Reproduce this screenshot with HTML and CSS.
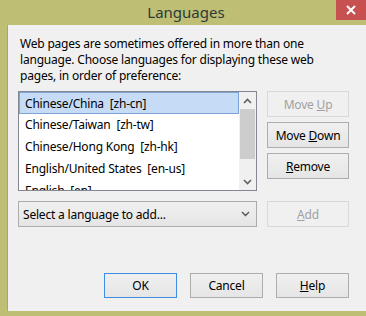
FILE: index.html
```html
<!DOCTYPE html>
<html lang="en">
<head>
    <meta charset="UTF-8">
    <title>Languages</title>
    <link rel="stylesheet" href="styles.css">
</head>
<body>
    <div class="window">
        <div class="titlebar">
            <span class="title">Languages</span>
            <span class="close">
                <svg width="10" height="10" viewBox="0 0 10 10">
                    <path d="M1 1 L9 9 M9 1 L1 9" stroke="#fff" stroke-width="2"/>
                </svg>
            </span>
        </div>

        <div class="client">
            <p class="intro">Web pages are sometimes offered in more than one<br>language. Choose languages for displaying these web<br>pages, in order of preference:</p>

            <div class="row">
                <div class="listbox">
                    <ul class="items">
                        <li class="selected">Chinese/China&nbsp; [zh-cn]</li>
                        <li>Chinese/Taiwan&nbsp; [zh-tw]</li>
                        <li>Chinese/Hong Kong&nbsp; [zh-hk]</li>
                        <li>English/United States&nbsp; [en-us]</li>
                        <li>English&nbsp; [en]</li>
                    </ul>
                    <div class="scrollbar">
                        <span class="arrow">
                            <svg width="9" height="6" viewBox="0 0 9 6"><path d="M1 5 L4.5 1.5 L8 5" stroke="#606060" stroke-width="1.6" fill="none"/></svg>
                        </span>
                        <span class="track"><span class="thumb"></span></span>
                        <span class="arrow">
                            <svg width="9" height="6" viewBox="0 0 9 6"><path d="M1 1 L4.5 4.5 L8 1" stroke="#606060" stroke-width="1.6" fill="none"/></svg>
                        </span>
                    </div>
                </div>
                <div class="side">
                    <button class="btn" disabled>Move <u>U</u>p</button>
                    <button class="btn">Move <u>D</u>own</button>
                    <button class="btn"><u>R</u>emove</button>
                </div>
            </div>

            <div class="row addrow">
                <div class="select">
                    <span>Select a language to add...</span>
                    <svg width="9" height="6" viewBox="0 0 9 6"><path d="M1 1 L4.5 4.5 L8 1" stroke="#555" stroke-width="1.4" fill="none"/></svg>
                </div>
                <button class="btn" disabled><u>A</u>dd</button>
            </div>

            <div class="footer">
                <button class="btn default">OK</button>
                <button class="btn">Cancel</button>
                <button class="btn"><u>H</u>elp</button>
            </div>
        </div>
    </div>
</body>
</html>
```

FILE: styles.css
```css
body {
    margin: 0;
    font-family: "Noto Sans", "DejaVu Sans", sans-serif;
    font-size: 12px;
    color: #000;
    background-color: #bfbe75;
}

.window {
    width: 366px;
    height: 316px;
    display: flex;
    flex-direction: column;
    background-color: #bfbe75;
    overflow: hidden;
}

.titlebar {
    height: 25px;
    flex: none;
    position: relative;
    text-align: center;
}

.title {
    display: inline-block;
    padding-left: 6px;
    line-height: 24px;
    font-size: 15px;
    color: #2a3b3a;
}

.close {
    position: absolute;
    top: 0;
    right: 0;
    width: 30px;
    height: 20px;
    background-color: #c75050;
    display: flex;
    align-items: center;
    justify-content: center;
}

.client {
    height: 286px;
    margin-left: 7px;
    border-left: 1px solid #aaa963;
    padding: 11px 17px 0 10px;
    background-color: #f0f0f0;
    box-sizing: border-box;
}

.intro {
    margin: 0;
    padding-left: 2px;
    line-height: 16px;
    letter-spacing: -0.2px;
}

.row {
    display: flex;
    gap: 10px;
    margin-top: 7px;
}

.listbox {
    width: 239px;
    height: 100px;
    box-sizing: border-box;
    border: 1px solid #828790;
    background-color: #fff;
    display: flex;
    overflow: hidden;
}

.items {
    flex: 1;
    margin: 0;
    padding: 0;
    list-style: none;
    overflow: hidden;
}

.items li {
    height: 22px;
    line-height: 21px;
    padding-left: 6px;
    box-sizing: border-box;
    white-space: nowrap;
    letter-spacing: -0.2px;
}

.items li.selected {
    background-color: #c6dcf6;
    border: 1px solid #7ea4d6;
    padding-left: 5px;
}

.scrollbar {
    width: 17px;
    flex: none;
    display: flex;
    flex-direction: column;
    background-color: #f0f0f0;
}

.arrow {
    height: 17px;
    display: flex;
    align-items: center;
    justify-content: center;
}

.track {
    flex: 1;
    padding: 0 1px;
}

.thumb {
    display: block;
    height: 50px;
    background-color: #cdcdcd;
}

.side {
    display: flex;
    flex-direction: column;
    gap: 5px;
}

.btn {
    width: 82px;
    height: 26px;
    padding: 0;
    font-family: "Noto Sans", "DejaVu Sans", sans-serif;
    font-size: 12px;
    color: #000;
    border: 1px solid #adadad;
    background: linear-gradient(#f0f0f0, #e5e5e5);
    letter-spacing: -0.2px;
}

.btn:disabled {
    color: #a0a0a0;
    border-color: #d9d9d9;
    background: #f0f0f0;
}

.btn.default {
    border-color: #3d8ee3;
}

.addrow {
    margin-top: 10px;
}

.select {
    width: 239px;
    height: 26px;
    box-sizing: border-box;
    border: 1px solid #acacac;
    background: linear-gradient(#f0f0f0, #e5e5e5);
    display: flex;
    align-items: center;
    justify-content: space-between;
    padding: 0 6px 0 4px;
    letter-spacing: -0.2px;
}

.footer {
    display: flex;
    justify-content: flex-end;
    gap: 13px;
    margin-top: 46px;
}

.footer .btn {
    width: 73px;
    height: 25px;
}
```
